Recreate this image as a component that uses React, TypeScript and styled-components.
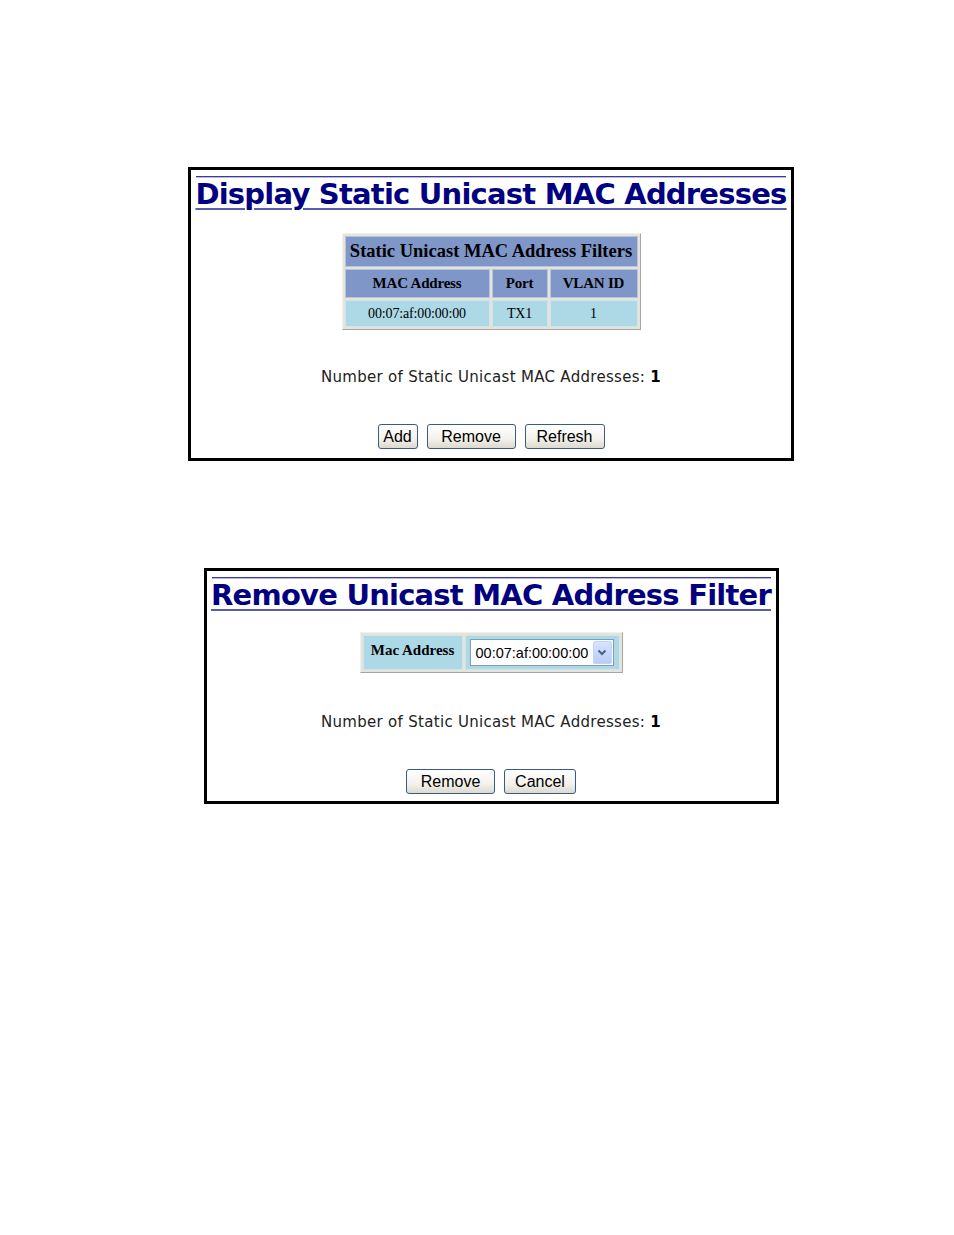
import React from 'react'
import styled, { createGlobalStyle } from 'styled-components'

const GlobalStyle = createGlobalStyle`
  html, body {
    margin: 0;
    padding: 0;
    background: #ffffff;
  }
`

export default function App() {
  return (
    <Page>
      <GlobalStyle />
      <Panel $width={606} $height={294}>
        <TitleRule />
        <Title>Display Static Unicast MAC Addresses</Title>
        <FilterTable $top={23}>
          <tbody>
            <tr>
              <CaptionCell colSpan={3}>Static Unicast MAC Address Filters</CaptionCell>
            </tr>
            <tr>
              <HeadCell $w={145}>MAC Address</HeadCell>
              <HeadCell $w={56}>Port</HeadCell>
              <HeadCell $w={88}>VLAN ID</HeadCell>
            </tr>
            <tr>
              <DataCell>00:07:af:00:00:00</DataCell>
              <DataCell>TX1</DataCell>
              <DataCell>1</DataCell>
            </tr>
          </tbody>
        </FilterTable>
        <Count $top={38}>
          Number of Static Unicast MAC Addresses: <b>1</b>
        </Count>
        <ButtonRow $top={38}>
          <Button $w={40}>Add</Button>
          <Button $w={89}>Remove</Button>
          <Button $w={80}>Refresh</Button>
        </ButtonRow>
      </Panel>

      <Gap />

      <Panel $width={575} $height={236}>
        <TitleRule />
        <Title>Remove Unicast MAC Address Filter</Title>
        <FilterTable $top={21}>
          <tbody>
            <tr>
              <LabelCell>Mac Address</LabelCell>
              <SelectCell>
                <SelectBox>
                  <SelectValue>00:07:af:00:00:00</SelectValue>
                  <SelectArrow>
                    <svg width="10" height="7" viewBox="0 0 10 7">
                      <path d="M1.5 1.5 L5 5 L8.5 1.5" fill="none" stroke="#4d6185" strokeWidth="2" />
                    </svg>
                  </SelectArrow>
                </SelectBox>
              </SelectCell>
            </tr>
          </tbody>
        </FilterTable>
        <Count $top={40}>
          Number of Static Unicast MAC Addresses: <b>1</b>
        </Count>
        <ButtonRow $top={38}>
          <Button $w={89}>Remove</Button>
          <Button $w={72}>Cancel</Button>
        </ButtonRow>
      </Panel>
    </Page>
  )
}

const Page = styled.div`
  width: 954px;
  height: 1235px;
  box-sizing: border-box;
  padding: 167px 0 0 28px;
  display: flex;
  flex-direction: column;
  align-items: center;
`

const Gap = styled.div`
  height: 107px;
  flex: none;
`

const Panel = styled.section<{ $width: number; $height: number }>`
  width: ${p => p.$width}px;
  height: ${p => p.$height}px;
  box-sizing: border-box;
  border: 3px solid #000000;
  padding: 6px 5px 0;
  display: flex;
  flex-direction: column;
  align-items: center;
  flex: none;
`

const TitleRule = styled.div`
  align-self: stretch;
  height: 1px;
  background: #3a3aa0;
  border-bottom: 1px solid #b9b9dc;
`

const Title = styled.h1`
  margin: 0;
  font-family: "DejaVu Sans", Verdana, sans-serif;
  font-weight: bold;
  font-size: 29px;
  line-height: 32px;
  color: #000080;
  text-decoration: underline;
  text-decoration-color: #5a5ab0;
  text-decoration-thickness: 2px;
  text-underline-offset: 4px;
  white-space: nowrap;
  letter-spacing: -0.78px;
`

const FilterTable = styled.table<{ $top: number }>`
  margin-top: ${p => p.$top}px;
  border-collapse: separate;
  border-spacing: 2px;
  background: #e6e3da;
  border: 1px solid;
  border-color: #f2f0ea #a8a59c #a8a59c #f2f0ea;
  font-family: "Liberation Serif", "Times New Roman", serif;
  color: #000000;
`

const CaptionCell = styled.td`
  background: #7f96c9;
  height: 29px;
  padding: 0 4px;
  font-size: 18.5px;
  font-weight: bold;
  text-align: center;
  border: 1px solid #b8c3dc;
  white-space: nowrap;
`

const HeadCell = styled.td<{ $w: number }>`
  width: ${p => p.$w - 2}px;
  background: #7f96c9;
  height: 27px;
  padding: 0;
  font-size: 15px;
  font-weight: bold;
  text-align: center;
  border: 1px solid #b8c3dc;
  white-space: nowrap;
  letter-spacing: -0.2px;
`

const DataCell = styled.td`
  background: #add8e6;
  height: 25px;
  padding: 0;
  font-size: 14px;
  text-align: center;
  border: 1px solid #cde6ee;
  letter-spacing: -0.15px;
`

const LabelCell = styled.td`
  width: 98px;
  height: 29px;
  background: #add8e6;
  padding: 0 0 4px;
  font-size: 15px;
  font-weight: bold;
  text-align: center;
  border: 1px solid #cde6ee;
  white-space: nowrap;
`

const SelectCell = styled.td`
  width: 149px;
  height: 33px;
  background: #add8e6;
  padding: 0 0 0 4px;
  border: 1px solid #cde6ee;
`

const SelectBox = styled.div`
  width: 144px;
  height: 27px;
  box-sizing: border-box;
  border: 1px solid #7f9db9;
  background: #ffffff;
  display: flex;
  align-items: center;
  padding: 1px;
`

const SelectValue = styled.span`
  flex: 1;
  padding-left: 4px;
  font-family: "Liberation Sans", Arial, sans-serif;
  font-size: 14.5px;
  color: #000000;
  white-space: nowrap;
`

const SelectArrow = styled.span`
  width: 17px;
  height: 21px;
  border-radius: 2px;
  background: linear-gradient(#d6e3fd, #b9cdf8);
  border: 1px solid #c3d3f5;
  display: flex;
  align-items: center;
  justify-content: center;
`

const Count = styled.p<{ $top: number }>`
  margin: ${p => p.$top}px 0 0;
  font-family: "DejaVu Sans", Verdana, sans-serif;
  font-size: 15px;
  line-height: 18px;
  color: #222222;
  white-space: nowrap;
  letter-spacing: 0.3px;

  b {
    color: #000000;
  }
`

const ButtonRow = styled.div<{ $top: number }>`
  margin-top: ${p => p.$top}px;
  display: flex;
  gap: 9px;
`

const Button = styled.button<{ $w: number }>`
  width: ${p => p.$w}px;
  height: 25px;
  box-sizing: border-box;
  padding: 0;
  border: 1px solid #3c5a82;
  border-radius: 3px;
  background: linear-gradient(#ffffff, #f3f2ec 60%, #dcd9cd);
  font-family: "Liberation Sans", Arial, sans-serif;
  font-size: 16px;
  color: #000000;
`
